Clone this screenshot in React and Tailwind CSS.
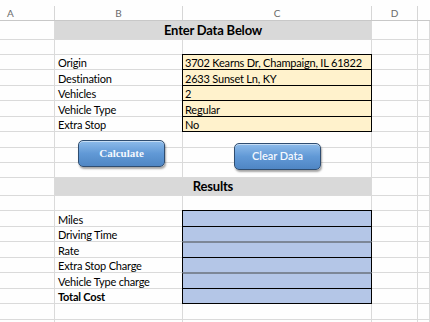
const grid = "border-[#dadada]";

const rows = [
  { h: "h-[19px]", kind: "title", text: "Enter Data Below" },
  { h: "h-[15px]" },
  { h: "h-[15px]", label: "Origin", box: "input", value: "3702 Kearns Dr, Champaign, IL 61822" },
  { h: "h-[16px]", label: "Destination", box: "input", value: "2633 Sunset Ln, KY" },
  { h: "h-[15px]", label: "Vehicles", box: "input", value: "2" },
  { h: "h-[16px]", label: "Vehicle Type", box: "input", value: "Regular" },
  { h: "h-[15px]", label: "Extra Stop", box: "input", value: "No" },
  { h: "h-[16px]" },
  { h: "h-[15px]" },
  { h: "h-[15px]" },
  { h: "h-[18px]", kind: "title", text: "Results" },
  { h: "h-[15px]" },
  { h: "h-[16px]", label: "Miles", box: "result" },
  { h: "h-[15px]", label: "Driving Time", box: "result" },
  { h: "h-[16px]", label: "Rate", box: "result", soft: true },
  { h: "h-[15px]", label: "Extra Stop Charge", box: "result" },
  { h: "h-[16px]", label: "Vehicle Type charge", box: "result", soft: true },
  { h: "h-[15px]", label: "Total Cost", box: "result", bold: true },
  { h: "h-[16px]" },
  { h: "h-[16px]" },
];

const Cell = ({ w, children, className = "" }) => (
  <div className={`${w} shrink-0 h-full border-r border-b ${grid} ${className}`}>{children}</div>
);

const BoxCell = ({ kind, soft, children }) => (
  <div
    className={`-ml-px -mt-px w-[190px] h-[calc(100%+1px)] shrink-0 border border-black flex items-end pl-[2px] leading-[13px] ${
      kind === "input" ? "bg-[#fff2cc]" : "bg-[#b4c6e7]"
    } ${soft ? "border-t-[#7d8797] border-t-2" : ""}`}
  >
    {children}
  </div>
);

const Row = ({ row }) => {
  if (row.kind === "title") {
    return (
      <div className={`flex ${row.h}`}>
        <Cell w="w-[55px]" />
        <div
          className={`w-[317px] shrink-0 h-full border-r border-b ${grid} bg-[#d9d9d9] flex items-center justify-center pt-px text-[13px] font-bold text-black`}
        >
          {row.text}
        </div>
        <Cell w="w-[46px]" />
        <Cell w="flex-1" />
      </div>
    );
  }
  return (
    <div className={`flex ${row.h}`}>
      <Cell w="w-[55px]" />
      <Cell w="w-[128px]" className={`flex items-end pl-[3px] leading-[13px] ${row.bold ? "font-bold" : ""}`}>
        {row.label}
      </Cell>
      {row.box ? (
        <BoxCell kind={row.box} soft={row.soft}>
          {row.value}
        </BoxCell>
      ) : (
        <Cell w="w-[189px]" />
      )}
      <Cell w="w-[46px]" />
      <Cell w="flex-1" />
    </div>
  );
};

const SheetButton = ({ className, children, serif }) => (
  <div
    className={`absolute w-[87px] h-[27px] rounded-[5px] border border-[#2f4d70] bg-gradient-to-b from-[#8dbbea] via-[#6199d6] to-[#4f86c4] shadow-[1px_2px_2px_rgba(0,0,0,0.35),inset_0_1px_0_rgba(255,255,255,0.5)] flex items-center justify-center text-[#f4f8fe] text-[11px] tracking-normal ${
      serif ? "font-['Liberation_Serif',serif] font-bold" : "font-semibold"
    } ${className}`}
  >
    {children}
  </div>
);

export default function App() {
  return (
    <div className="relative w-[430px] h-[322px] overflow-hidden bg-[#fefefe] text-[11px] tracking-[-0.2px] text-black font-['Lato','Liberation_Sans',sans-serif]">
      <div className="flex h-[21px] border-b border-[#c8c8c8] text-[10px] text-[#6a6a6a]">
        <div className="w-[55px] shrink-0 pt-[6px]">
          <div className="h-full border-r border-[#d6d6d6] pl-[7px] leading-[14px]">A</div>
        </div>
        <div className="w-[128px] shrink-0 pt-[6px]">
          <div className="h-full border-r border-[#d6d6d6] text-center leading-[14px]">B</div>
        </div>
        <div className="w-[189px] shrink-0 pt-[6px]">
          <div className="h-full border-r border-[#d6d6d6] text-center leading-[14px]">C</div>
        </div>
        <div className="w-[46px] shrink-0 pt-[6px]">
          <div className="h-full border-r border-[#d6d6d6] text-center leading-[14px]">D</div>
        </div>
        <div className="flex-1" />
      </div>
      {rows.map((row, i) => (
        <Row key={i} row={row} />
      ))}
      <SheetButton className="left-[78px] top-[140px]" serif>
        Calculate
      </SheetButton>
      <SheetButton className="left-[234px] top-[143px]">Clear Data</SheetButton>
    </div>
  );
}
